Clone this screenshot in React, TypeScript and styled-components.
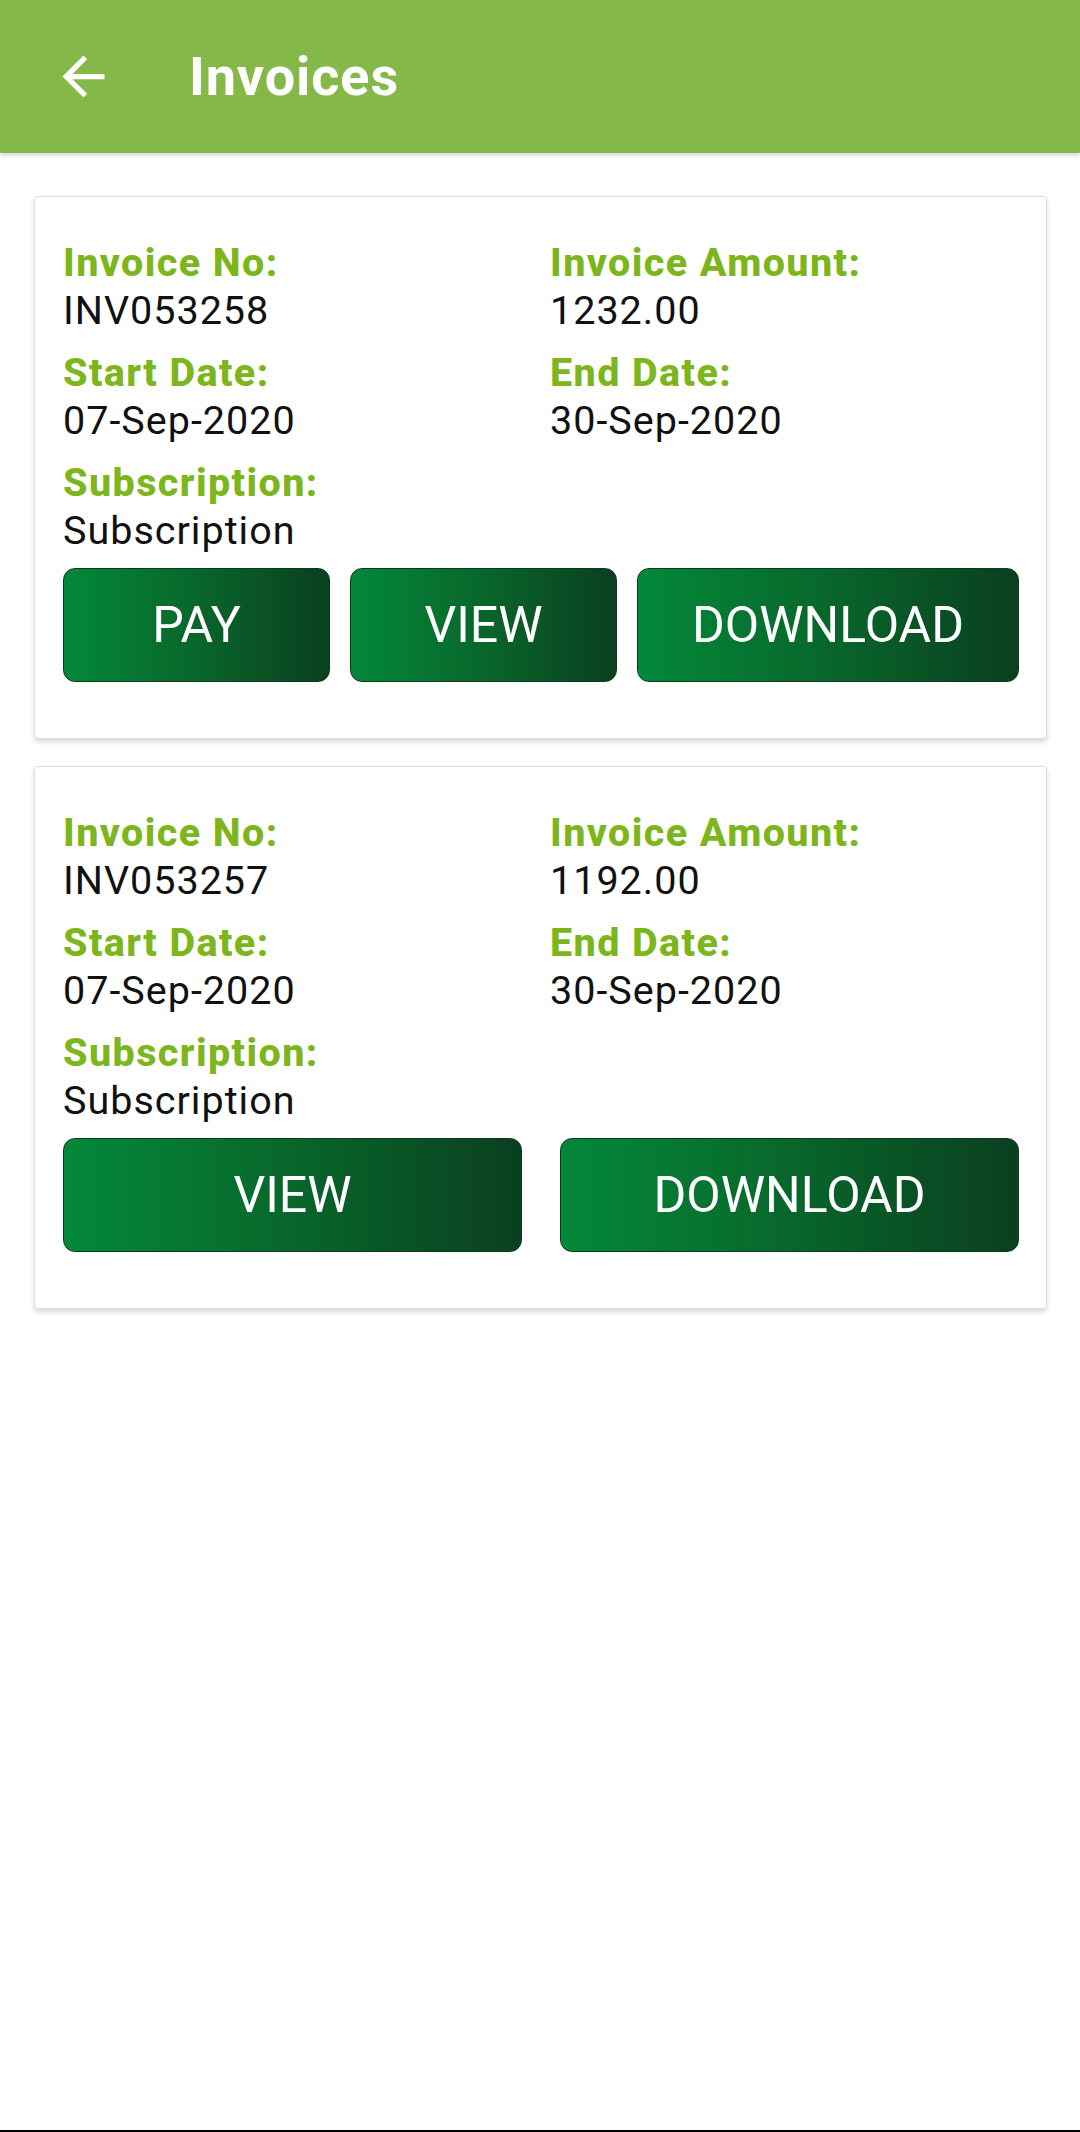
import styled, { createGlobalStyle } from "styled-components";

interface IInvoice {
  number: string;
  amount: string;
  start: string;
  end: string;
  subscription: string;
  canPay: boolean;
}

const invoices: IInvoice[] = [
  {
    number: "INV053258",
    amount: "1232.00",
    start: "07-Sep-2020",
    end: "30-Sep-2020",
    subscription: "Subscription",
    canPay: true,
  },
  {
    number: "INV053257",
    amount: "1192.00",
    start: "07-Sep-2020",
    end: "30-Sep-2020",
    subscription: "Subscription",
    canPay: false,
  },
];

const GlobalStyle = createGlobalStyle`
  html, body {
    margin: 0;
    padding: 0;
    background: #ffffff;
  }
  body {
    font-family: Roboto, "Noto Sans", "Liberation Sans", sans-serif;
  }
`;

const Screen = styled.div`
  min-height: 2132px;
  display: flex;
  flex-direction: column;
  background: #ffffff;
`;

const Toolbar = styled.header`
  height: 153px;
  display: flex;
  align-items: center;
  padding-left: 52px;
  background: #84b848;
  box-shadow: 0 2px 4px rgba(0, 0, 0, 0.18);
  position: relative;
  z-index: 2;
`;

const BackButton = styled.button`
  width: 63px;
  height: 63px;
  padding: 0;
  margin: 0;
  border: none;
  background: transparent;
  display: flex;
  align-items: center;
  justify-content: center;
`;

const Title = styled.h1`
  margin: 0 0 0 74px;
  font-family: Roboto, sans-serif;
  font-weight: 700;
  font-size: 54px;
  color: #ffffff;
  letter-spacing: 0.9px;
`;

const List = styled.main`
  flex: 1;
  display: flex;
  flex-direction: column;
  gap: 27px;
  padding: 43px 33px 0 34px;
`;

const Card = styled.section`
  background: #ffffff;
  border: 1px solid #dedede;
  border-radius: 4px;
  box-shadow: 0 3px 5px rgba(0, 0, 0, 0.16);
  padding: 42px 27px 56px 28px;
`;

const Fields = styled.div`
  display: grid;
  grid-template-columns: 487px 1fr;
  row-gap: 14px;
`;

const Field = styled.div`
  display: flex;
  flex-direction: column;
`;

const Label = styled.span`
  font-size: 39.5px;
  line-height: 48px;
  font-weight: 800;
  letter-spacing: 1.4px;
  color: #7db61c;
`;

const Value = styled.span`
  font-size: 39.5px;
  line-height: 48px;
  font-weight: 400;
  letter-spacing: 1px;
  color: #111111;
`;

const Actions = styled.div<{ $count: number }>`
  margin-top: 13px;
  display: grid;
  grid-template-columns: ${(p) =>
    p.$count === 3 ? "267px 267px 1fr" : "1fr 1fr"};
  column-gap: ${(p) => (p.$count === 3 ? "20px" : "38px")};
`;

const ActionButton = styled.button`
  height: 114px;
  border: 1px solid #0a3a1c;
  border-radius: 12px;
  background: linear-gradient(90deg, #03883a 0%, #086a2c 45%, #0a3f1f 100%);
  color: #ffffff;
  font-family: Roboto, sans-serif;
  font-size: 50px;
  font-weight: 400;
  letter-spacing: 0;
  text-transform: uppercase;
  cursor: pointer;
`;

const BottomEdge = styled.div`
  height: 2px;
  background: #000000;
`;

const ArrowBack = () => (
  <svg width="63" height="63" viewBox="0 0 24 24" fill="#ffffff">
    <path d="M20 11H7.83l5.59-5.59L12 4l-8 8 8 8 1.41-1.41L7.83 13H20v-2z" />
  </svg>
);

const InvoiceCard = ({ invoice }: { invoice: IInvoice }) => {
  const actions = invoice.canPay
    ? ["Pay", "View", "Download"]
    : ["View", "Download"];

  return (
    <Card>
      <Fields>
        <Field>
          <Label>Invoice No:</Label>
          <Value>{invoice.number}</Value>
        </Field>
        <Field>
          <Label>Invoice Amount:</Label>
          <Value>{invoice.amount}</Value>
        </Field>
        <Field>
          <Label>Start Date:</Label>
          <Value>{invoice.start}</Value>
        </Field>
        <Field>
          <Label>End Date:</Label>
          <Value>{invoice.end}</Value>
        </Field>
        <Field>
          <Label>Subscription:</Label>
          <Value>{invoice.subscription}</Value>
        </Field>
      </Fields>
      <Actions $count={actions.length}>
        {actions.map((action) => (
          <ActionButton key={action}>{action}</ActionButton>
        ))}
      </Actions>
    </Card>
  );
};

const App = () => {
  return (
    <Screen>
      <GlobalStyle />
      <Toolbar>
        <BackButton aria-label="Back">
          <ArrowBack />
        </BackButton>
        <Title>Invoices</Title>
      </Toolbar>
      <List>
        {invoices.map((invoice) => (
          <InvoiceCard key={invoice.number} invoice={invoice} />
        ))}
      </List>
      <BottomEdge />
    </Screen>
  );
};

export default App;
